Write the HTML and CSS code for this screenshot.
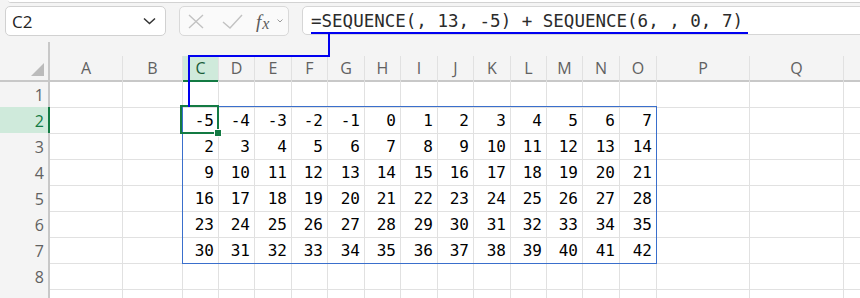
FILE: index.html
```html
<!DOCTYPE html>
<html lang="en">
<head>
    <meta charset="UTF-8">
    <title>SEQUENCE sheet</title>
    <link rel="stylesheet" href="styles.css">
</head>
<body>
    <div class="app">
        <!-- Formula bar -->
        <header class="toolbar">
            <div class="ribbon-edge"></div>
            <div class="bar">
                <div class="name-box">
                    <span>C2</span>
                    <svg width="13" height="8" viewBox="0 0 13 8"><path d="M1 1.5 L6.5 6.5 L12 1.5" fill="none" stroke="#333" stroke-width="1.5"/></svg>
                </div>
                <div class="fn-box">
                    <svg class="ico-x" width="16" height="15" viewBox="0 0 16 15"><path d="M1 1 L15 14 M15 1 L1 14" stroke="#c2c2c2" stroke-width="1.4"/></svg>
                    <svg class="ico-check" width="21" height="15" viewBox="0 0 21 15"><path d="M1 8 L8 14 L20 1" fill="none" stroke="#c2c2c2" stroke-width="1.4"/></svg>
                    <span class="fx"><i>f</i><span>x</span></span>
                    <svg class="ico-more" width="6" height="4" viewBox="0 0 6 4"><path d="M0.5 0.5 L3 3 L5.5 0.5" fill="none" stroke="#9a9a9a" stroke-width="1"/></svg>
                </div>
                <div class="formula-box">
                    <span class="formula">=SEQUENCE(, 13, -5) + SEQUENCE(6, , 0, 7)</span>
                </div>
            </div>
        </header>

        <!-- Sheet -->
        <main class="sheet">
            <div class="row head">
                <div class="corner"></div>
                <div>A</div><div>B</div><div class="sel">C</div><div>D</div><div>E</div><div>F</div><div>G</div><div>H</div><div>I</div><div>J</div><div>K</div><div>L</div><div>M</div><div>N</div><div>O</div><div>P</div><div>Q</div><div></div>
            </div>
            <div class="row">
                <div class="rh">1</div>
                <div></div><div></div><div></div><div></div><div></div><div></div><div></div><div></div><div></div><div></div><div></div><div></div><div></div><div></div><div></div><div></div><div></div><div></div>
            </div>
            <div class="row">
                <div class="rh sel">2</div>
                <div></div><div></div><div>-5</div><div>-4</div><div>-3</div><div>-2</div><div>-1</div><div>0</div><div>1</div><div>2</div><div>3</div><div>4</div><div>5</div><div>6</div><div>7</div><div></div><div></div><div></div>
            </div>
            <div class="row">
                <div class="rh">3</div>
                <div></div><div></div><div>2</div><div>3</div><div>4</div><div>5</div><div>6</div><div>7</div><div>8</div><div>9</div><div>10</div><div>11</div><div>12</div><div>13</div><div>14</div><div></div><div></div><div></div>
            </div>
            <div class="row">
                <div class="rh">4</div>
                <div></div><div></div><div>9</div><div>10</div><div>11</div><div>12</div><div>13</div><div>14</div><div>15</div><div>16</div><div>17</div><div>18</div><div>19</div><div>20</div><div>21</div><div></div><div></div><div></div>
            </div>
            <div class="row">
                <div class="rh">5</div>
                <div></div><div></div><div>16</div><div>17</div><div>18</div><div>19</div><div>20</div><div>21</div><div>22</div><div>23</div><div>24</div><div>25</div><div>26</div><div>27</div><div>28</div><div></div><div></div><div></div>
            </div>
            <div class="row">
                <div class="rh">6</div>
                <div></div><div></div><div>23</div><div>24</div><div>25</div><div>26</div><div>27</div><div>28</div><div>29</div><div>30</div><div>31</div><div>32</div><div>33</div><div>34</div><div>35</div><div></div><div></div><div></div>
            </div>
            <div class="row">
                <div class="rh">7</div>
                <div></div><div></div><div>30</div><div>31</div><div>32</div><div>33</div><div>34</div><div>35</div><div>36</div><div>37</div><div>38</div><div>39</div><div>40</div><div>41</div><div>42</div><div></div><div></div><div></div>
            </div>
            <div class="row">
                <div class="rh">8</div>
                <div></div><div></div><div></div><div></div><div></div><div></div><div></div><div></div><div></div><div></div><div></div><div></div><div></div><div></div><div></div><div></div><div></div><div></div>
            </div>
            <div class="row">
                <div class="rh"></div>
                <div></div><div></div><div></div><div></div><div></div><div></div><div></div><div></div><div></div><div></div><div></div><div></div><div></div><div></div><div></div><div></div><div></div><div></div>
            </div>

            <!-- Spill range and active cell -->
            <div class="spill-range"></div>
            <div class="active-cell"><span class="handle"></span></div>
        </main>

        <!-- Precedent arrow from the formula to C2 -->
        <svg class="tracer" width="860" height="298" viewBox="0 0 860 298">
            <path d="M329 34 V56 H189 V107" fill="none" stroke="#0000f0" stroke-width="2"/>
        </svg>
    </div>
</body>
</html>
```

FILE: styles.css
```css
/* General */
body {
    margin: 0;
    background: #fff;
    overflow: hidden;
}

.app {
    position: relative;
    width: 860px;
    height: 298px;
    overflow: hidden;
}

/* Formula bar */
.toolbar {
    height: 56px;
    background: #f4f4f4;
}

.ribbon-edge {
    height: 2px;
    margin-left: 8px;
    background: #fff;
    border-bottom: 1px solid #d2d2d2;
    border-bottom-left-radius: 6px;
}

.bar {
    display: flex;
    padding: 3px 0 0 5px;
}

.name-box {
    width: 161px;
    height: 30px;
    box-sizing: border-box;
    display: flex;
    align-items: center;
    justify-content: space-between;
    padding: 0 9px 0 6px;
    background: #fff;
    border: 1px solid #d1d1d1;
    border-radius: 5px;
    font-family: "Open Sans", sans-serif;
    font-size: 17px;
    color: #242424;
}

.fn-box {
    width: 110px;
    height: 30px;
    box-sizing: border-box;
    margin-left: 13px;
    display: flex;
    align-items: center;
    padding-left: 8px;
    background: #fafafa;
    border: 1px solid #d9d9d9;
    border-radius: 5px;
}

.ico-check {
    margin-left: 18px;
}

.fx {
    margin-left: 13px;
    font-family: "Liberation Serif", serif;
    font-size: 19px;
    color: #5c5c5c;
    line-height: 1;
}

.fx i {
    margin-right: 1px;
}

.fx span {
    font-size: 16px;
    font-style: italic;
    position: relative;
    top: 1px;
}

.ico-more {
    margin-left: 8px;
}

.formula-box {
    flex: 1;
    height: 29px;
    box-sizing: border-box;
    margin-left: 13px;
    margin-right: -10px;
    padding-left: 8px;
    background: #fff;
    border: 1px solid #d6d6d6;
    border-radius: 5px 0 0 5px;
}

.formula {
    display: inline-block;
    margin-top: 3px;
    padding-right: 5px;
    line-height: 22px;
    border-bottom: 2px solid #0000f0;
    font-family: "DejaVu Sans Mono", monospace;
    font-size: 17.5px;
    color: #2b2b2b;
    white-space: pre;
}

/* Sheet grid */
.sheet {
    position: relative;
}

.row {
    display: grid;
    grid-template-columns: 50px 73px 60px 36px 36px 37px 36px 37px 36px 37px 36px 37px 36px 36px 37px 37px 93px 94px 60px;
    height: 26px;
}

.row > div {
    box-sizing: border-box;
    border-right: 1px solid #e1e1e1;
    border-bottom: 1px solid #e1e1e1;
    padding: 2px 4px 0 0;
    text-align: right;
    font-family: "DejaVu Sans Mono", monospace;
    font-size: 16px;
    line-height: 24px;
    color: #000;
}

.row.head {
    height: 25px;
}

.row.head > div {
    background: #f4f4f4;
    border-bottom: 2px solid #c8c8c8;
    padding: 0;
    text-align: center;
    font-family: "Open Sans", sans-serif;
    font-size: 16px;
    line-height: 24px;
    color: #616161;
}

.row.head > div.sel {
    background: #cfeadb;
    border-bottom-color: #137a43;
    color: #185c37;
}

.row > .rh {
    background: #f4f4f4;
    border-right: 2px solid #c8c8c8;
    padding-right: 4px;
    font-family: "Open Sans", sans-serif;
    font-size: 16px;
    color: #616161;
}

.row > .rh.sel {
    background: #cfeadb;
    border-right-color: #137a43;
    color: #137a43;
}

.row.head > .corner {
    position: relative;
    border-right: 2px solid #c8c8c8;
}

.corner::before {
    content: "";
    position: absolute;
    top: -14px;
    right: -2px;
    width: 2px;
    height: 14px;
    background: #c8c8c8;
}

.corner::after {
    content: "";
    position: absolute;
    right: 4px;
    bottom: 4px;
    width: 13px;
    height: 13px;
    background: #bbb;
    clip-path: polygon(100% 0, 100% 100%, 0 100%);
}

/* Overlays */
.spill-range {
    position: absolute;
    left: 182px;
    top: 50px;
    width: 475px;
    height: 158px;
    box-sizing: border-box;
    border: 1px solid #3a6fcc;
    pointer-events: none;
}

.active-cell {
    position: absolute;
    left: 180px;
    top: 49px;
    width: 39px;
    height: 29px;
    box-sizing: border-box;
    border: 2px solid #137a43;
    pointer-events: none;
}

.handle {
    position: absolute;
    right: -5px;
    bottom: -5px;
    width: 6px;
    height: 6px;
    background: #137a43;
    border: 1px solid #fff;
}

.tracer {
    position: absolute;
    left: 0;
    top: 0;
    pointer-events: none;
}
```
